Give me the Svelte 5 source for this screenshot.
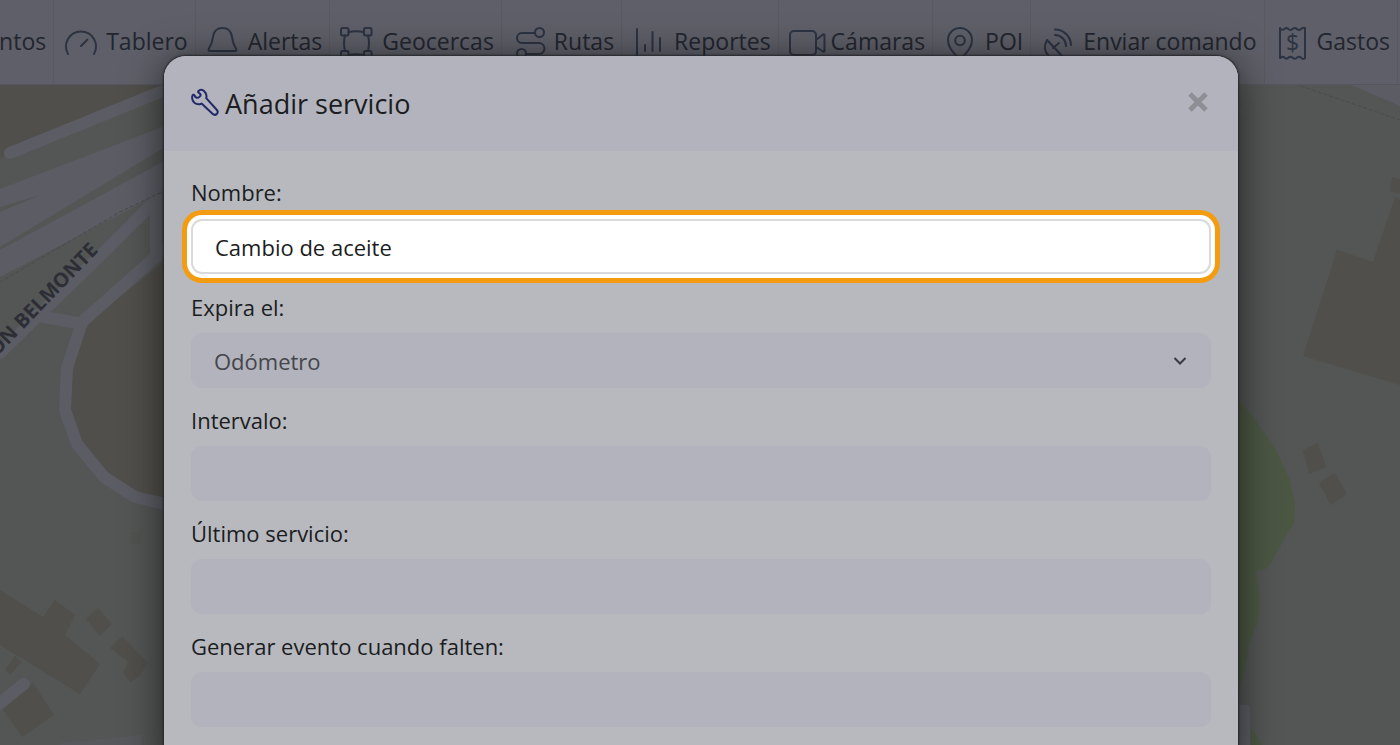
<script>
const NAV_ITEMS = [
	{label: 'Eventos', icon: 'events'},
	{label: 'Tablero', icon: 'gauge'},
	{label: 'Alertas', icon: 'bell'},
	{label: 'Geocercas', icon: 'geofence'},
	{label: 'Rutas', icon: 'route'},
	{label: 'Reportes', icon: 'chart'},
	{label: 'Cámaras', icon: 'camera'},
	{label: 'POI', icon: 'pin'},
	{label: 'Enviar comando', icon: 'dish'},
	{label: 'Gastos', icon: 'receipt'},
]

const EXPIRE_OPTIONS = ['Odómetro', 'Horas de motor', 'Días']

let open = $state(true)
let service = $state({
	name: 'Cambio de aceite',
	expires: 'Odómetro',
	interval: '',
	last: '',
	notify: '',
})

const close = () => {
	open = false
}
</script>

<div class="page">
	<svg class="map" viewBox="0 0 1400 745" preserveAspectRatio="xMidYMin slice" aria-hidden="true">
		<g class="building">
			<path d="M0 80H164V86L0 158Z" />
			<path d="M164 262L84 325L66 372L66 414L80 446L106 476L136 495L164 502Z" />
			<path d="M0 590L43 617L55 600L75 615L65 635L100 664L80 694L0 645Z" />
			<path d="M86 619L98 608L112 624L100 636Z" />
			<path d="M110 648L122 636L148 663L140 676L130 682L123 672L128 662Z" />
			<path d="M5 670L15 656L22 662L10 675Z" />
			<path d="M3 710L33 683L54 715L22 737Z" />
			<path d="M1337 250L1373 262L1395 197L1400 199V385L1303 356Z" />
			<path d="M1392 177L1400 179V194L1390 191Z" />
			<path d="M1303 450L1318 443L1326 467L1309 474Z" />
			<path d="M1319 483L1335 473L1347 494L1331 505Z" />
			<path d="M131 532H141V544H131Z" opacity=".5" />
		</g>
		<g class="park">
			<path d="M1230 390L1252 415L1275 448L1290 480L1295 505L1294 524L1285 537L1268 568L1256 571L1260 600L1258 620L1249 645L1243 675L1236 705Z" />
			<path d="M1251 728L1262 745H1251Z" />
		</g>
		<g class="road-fill">
			<path d="M0 189L170 124V144L0 247V212L40 195L0 207Z" />
			<path d="M0 250L170 158V188L0 277Z" />
			<path d="M1340 80H1400V106Z" />
			<path d="M1230 705H1246Q1250 705 1250 709V745H1230Z" />
			<path d="M60 743L142 735V745H60Z" opacity=".4" />
		</g>
		<g class="road">
			<path d="M10 153L170 88" />
			<path d="M0 353L104 252L156 200" />
			<path d="M156 195V258" />
			<path d="M168 246L82 322L67 368L65 410L77 444L104 477L135 497L170 505" />
			<path d="M34 315L82 324" />
			<path d="M-4 706L24 684" />
		</g>
		<path class="rail" d="M0 282L120 212L170 188M1295 84L1400 120" />
		<text class="street" transform="translate(99 251) rotate(-46)" text-anchor="end">ON BELMONTE</text>
	</svg>

	<nav class="toolbar">
		{#each NAV_ITEMS as item (item.label)}
			<a class="tool" href="#{item.icon}">
				<svg class="tool-icon" viewBox="0 0 38 36" aria-hidden="true">
					{#if item.icon === 'events'}
						<path d="M7 6H31V30H7ZM12 13H26M12 19H26M12 25H20" />
					{:else if item.icon === 'gauge'}
						<path d="M6 30A15 15 0 1 1 32 30M19 22L25.5 15.5" />
					{:else if item.icon === 'bell'}
						<path d="M6 27C4.5 27 4.2 26 5 24.5C8 20 8.5 17 9 13C10 6 13 4 18.5 4C24 4 27 6 28 13C28.5 17 29 20 32 24.5C32.8 26 32.5 27 31 27Z" />
					{:else if item.icon === 'geofence'}
						<rect x="3" y="4" width="7.5" height="7.5" rx="1.5" />
						<rect x="26" y="4" width="7.5" height="7.5" rx="1.5" />
						<rect x="3" y="27" width="7.5" height="7.5" rx="1.5" />
						<rect x="26" y="27" width="7.5" height="7.5" rx="1.5" />
						<path d="M10.5 8Q18 6.5 26 8M10.5 31Q18 29.5 26 31M7 11.5Q5 19 7 27M30 11.5Q32 19 30 27" />
					{:else if item.icon === 'route'}
						<circle cx="29.5" cy="8.5" r="4.5" />
						<circle cx="11.5" cy="29.5" r="4.5" />
						<path d="M25 9H12A5 5 0 0 0 12 19H29A5.5 5.5 0 0 1 29 30H16" />
					{:else if item.icon === 'chart'}
						<path d="M7 5V33H34M15 21V27M22.500 8V27M30 14V27" />
					{:else if item.icon === 'camera'}
						<rect x="3" y="7" width="26" height="24" rx="4" />
						<path d="M29 16L36 10.500Q37.500 10 37.500 11V27Q37.500 28 36 27.500L29 23" />
					{:else if item.icon === 'pin'}
						<path d="M19 36C13 29 7 24 7 16A12 12 0 0 1 31 16C31 24 25 29 19 36Z" />
						<circle cx="19" cy="16.500" r="4.800" />
					{:else if item.icon === 'dish'}
						<path d="M8 16L26 35C14 39 1 29 8 16ZM14 24L20 19M16 5.500A16 16 0 0 1 32 21M16 11A11 11 0 0 1 27 22" />
					{:else}
						<path d="M7 4Q9 7 11.500 5Q13 3 15.500 5Q17 7 19.500 5Q22 3 24 5Q26 7 28 5Q30 3 32 4V34Q30 36 28 33.500Q26 32 24 33.500Q22 36 19.500 33.500Q17 32 15.500 33.500Q13 36 11.500 33.500Q9 32 7 34Z" />
						<text class="currency" x="19.500" y="27" text-anchor="middle">$</text>
					{/if}
				</svg>
				<span>{item.label}</span>
			</a>
		{/each}
	</nav>

	{#if open}
		<div class="overlay">
			<div class="dialog" role="dialog" aria-labelledby="dialog-title">
				<header class="dialog-header">
					<svg class="wrench" viewBox="0 0 28 28" aria-hidden="true">
						<path d="M7.500 3C9 1.300 11.500 1.600 13 3C15.200 5 16 7.500 15.200 10.200L25.500 21.500C27 23 27 24.500 26 25.700C24.600 27.200 22.800 27 21.500 25.800L10.600 15.600C8 16.800 5.500 16.500 3.400 14.800C1.500 13 .8 10.500 1.300 8C1.500 6.500 2.800 6.200 3.500 7.500C4.500 9.800 6.500 10.500 8.300 9C10.200 7.800 10 6.200 8.300 5.200C7.200 4.700 6.800 3.800 7.500 3Z" />
					</svg>
					<h1 id="dialog-title">Añadir servicio</h1>
					<button class="close" type="button" aria-label="Cerrar" onclick={close}>
						<svg viewBox="0 0 20 20" aria-hidden="true">
							<path d="M2 2L18 18M18 2L2 18" />
						</svg>
					</button>
				</header>
				<form class="dialog-body">
					<div class="group highlighted">
						<label for="name">Nombre:</label>
						<input id="name" type="text" bind:value={service.name} />
					</div>
					<div class="group">
						<label for="expires">Expira el:</label>
						<div class="select">
							<select id="expires" bind:value={service.expires}>
								{#each EXPIRE_OPTIONS as option}
									<option value={option}>{option}</option>
								{/each}
							</select>
							<svg class="chevron" viewBox="0 0 14 10" aria-hidden="true">
								<path d="M1.500 2L7 7.500L12.500 2" />
							</svg>
						</div>
					</div>
					<div class="group">
						<label for="interval">Intervalo:</label>
						<input id="interval" type="text" bind:value={service.interval} />
					</div>
					<div class="group">
						<label for="last">Último servicio:</label>
						<input id="last" type="text" bind:value={service.last} />
					</div>
					<div class="group">
						<label for="notify">Generar evento cuando falten:</label>
						<input id="notify" type="text" bind:value={service.notify} />
					</div>
				</form>
			</div>
		</div>
	{/if}
</div>

<style>
:global(body) {
	margin: 0;
	overflow: hidden;
}

.page {
	position: relative;
	height: 100vh;
	overflow: hidden;
	background: #535655;
	color: #1b1d22;
	font-family: "Open Sans", "Noto Sans", sans-serif;
	font-size: 22px;
}

.map {
	position: absolute;
	inset: 0;
	width: 100%;
	height: 100%;
}

.building {
	fill: #504f4b;
}

.park {
	fill: #4b5743;
}

.road-fill {
	fill: #5c5c65;
}

.road {
	fill: none;
	stroke: #5c5c65;
	stroke-width: 12;
	stroke-linecap: round;
	stroke-linejoin: round;
}

.rail {
	fill: none;
	stroke: #484a4c;
	stroke-width: 1;
	stroke-dasharray: 4 2;
}

.street {
	fill: #2d2e35;
	font-size: 20px;
	font-weight: 700;
}

.toolbar {
	position: relative;
	display: flex;
	justify-content: flex-end;
	height: 84px;
	padding-right: 2px;
	border-bottom: 1px solid #55565f;
	background: #5e5f68;
	overflow: hidden;
}

.tool {
	display: flex;
	flex: none;
	align-items: center;
	gap: 6px;
	box-sizing: border-box;
	padding: 0 7px 0 8px;
	border-right: 1px solid #595a61;
	color: #23262f;
	font-size: 23px;
	line-height: 32px;
	text-decoration: none;
	white-space: nowrap;
}

.tool span {
	padding-bottom: 2px;
}

.tool-icon {
	width: 38px;
	height: 36px;
	overflow: visible;
	fill: none;
	stroke: #2c3342;
	stroke-width: 2;
	stroke-linecap: round;
	stroke-linejoin: round;
}

.currency {
	fill: #2c3342;
	stroke: none;
	font-size: 23px;
}

.overlay {
	position: absolute;
	inset: 0;
	padding: 56px 162px 0 164px;
}

.dialog {
	border-radius: 22px 22px 0 0;
	background: #b8b9be;
	box-shadow: 0 0 2px 1px #25262a, 0 6px 40px rgba(0, 0, 0, 0.6);
}

.dialog-header {
	display: flex;
	align-items: center;
	height: 95px;
	box-sizing: border-box;
	padding: 0 30px 0 27px;
	border-radius: 22px 22px 0 0;
	background: #b2b3bc;
}

.wrench {
	width: 28px;
	height: 28px;
	margin: 0 6px 4px 0;
	fill: none;
	stroke: #23286b;
	stroke-width: 2;
	stroke-linejoin: round;
}

h1 {
	flex: 1;
	margin: 0;
	font-size: 27px;
	font-weight: 400;
	line-height: 36px;
}

.close {
	display: flex;
	margin-bottom: 4px;
	padding: 0;
	border: 0;
	background: none;
	cursor: pointer;
}

.close svg {
	width: 20px;
	height: 20px;
	fill: none;
	stroke: #8e8f94;
	stroke-width: 5;
}

.dialog-body {
	padding: 25px 27px;
}

.group {
	display: flex;
	flex-direction: column;
	gap: 10px;
	margin-bottom: 16px;
}

.group.highlighted {
	gap: 11px;
	margin-bottom: 17px;
}

label {
	line-height: 32px;
}

input,
select {
	width: 100%;
	height: 55px;
	box-sizing: border-box;
	padding: 0 22px;
	border: 1px solid #b2b3bc;
	border-radius: 11px;
	outline: 0;
	background: #b2b3bc;
	color: #45464b;
	font: inherit;
	appearance: none;
}

.highlighted input {
	border: 2px solid #d9dadc;
	background: #fff;
	box-shadow: 0 0 0 4px #fff, 0 0 0 9px #f39c12;
	color: #1b1d22;
}

.select {
	position: relative;
}

.chevron {
	position: absolute;
	top: 23px;
	right: 24px;
	width: 14px;
	height: 10px;
	fill: none;
	stroke: #3a3b41;
	stroke-width: 2;
	pointer-events: none;
}
</style>
